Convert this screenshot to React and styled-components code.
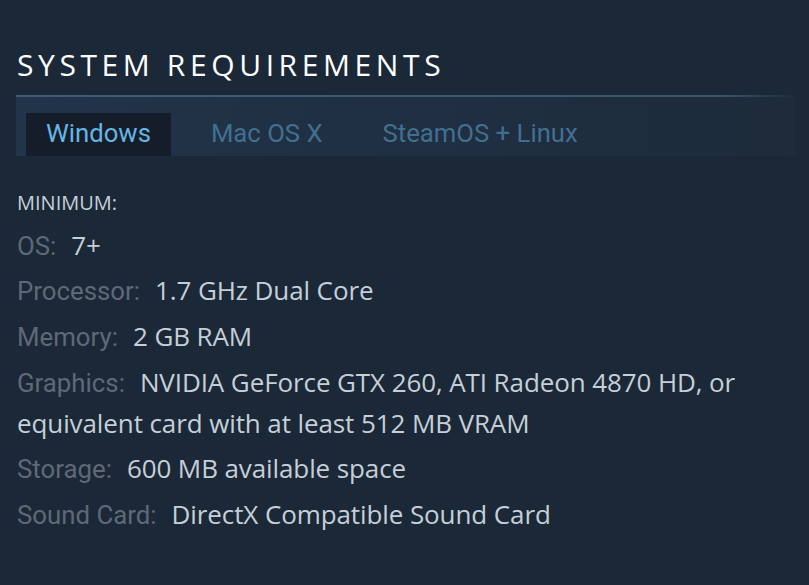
import React from "react";
import styled, { createGlobalStyle } from "styled-components";

const Global = createGlobalStyle`
  html, body { margin: 0; padding: 0; background: #1b2838; }
  body { width: 809px; height: 585px; overflow: hidden; }
`;

const Page = styled.div`
  box-sizing: border-box;
  width: 809px;
  height: 585px;
  padding: 47px 14px 0 16px;
  background: #1b2838;
`;

const Heading = styled.h2`
  margin: 0 0 12px 1px;
  font-family: "Open Sans", "Noto Sans", sans-serif;
  font-weight: 400;
  font-size: 30px;
  line-height: 36px;
  letter-spacing: 4.6px;
  color: #ffffff;
`;

const TabBar = styled.div`
  display: flex;
  gap: 20px;
  padding: 16px 10px 0 10px;
  height: 43px;
  border-top: 2px solid transparent;
  border-image: linear-gradient(to right, #3f5c76 0%, #3c566e 90%, rgba(60, 86, 110, 0) 100%) 1;
  background: linear-gradient(to right, #22344a 0%, #1f2e40 60%, #1d2b3b 100%);
`;

const Tab = styled.div`
  box-sizing: border-box;
  height: 43px;
  padding: 0 20px 3px 20px;
  font-family: Roboto, "Liberation Sans", sans-serif;
  font-size: 25.7px;
  line-height: 40px;
  color: ${(p) => (p.$active ? "#67b5e3" : "#41708f")};
  background: ${(p) => (p.$active ? "#141d29" : "transparent")};
  white-space: nowrap;
`;

const Body = styled.div`
  padding: 35px 0 0 1px;
`;

const Title = styled.div`
  font-family: "Open Sans", "Noto Sans", sans-serif;
  font-size: 20px;
  line-height: 24px;
  color: #c6d0d8;
  margin-bottom: 9.5px;
`;

const List = styled.ul`
  list-style: none;
  margin: 0;
  padding: 0;
`;

const Item = styled.li`
  font-family: "Open Sans", "Noto Sans", sans-serif;
  font-size: 26px;
  line-height: 41px;
  letter-spacing: -0.1px;
  color: #c6cfd7;
  margin-bottom: 4.7px;
`;

const Label = styled.span`
  font-family: Roboto, "Liberation Sans", sans-serif;
  font-size: 25.8px;
  line-height: 0;
  letter-spacing: 0;
  color: #5e6975;
  margin-right: 15px;
`;

const rows = [
  ["OS:", "7+"],
  ["Processor:", "1.7 GHz Dual Core"],
  ["Memory:", "2 GB RAM"],
  ["Graphics:", "NVIDIA GeForce GTX 260, ATI Radeon 4870 HD, or equivalent card with at least 512 MB VRAM"],
  ["Storage:", "600 MB available space"],
  ["Sound Card:", "DirectX Compatible Sound Card"],
];

export default function App() {
  return (
    <Page>
      <Global />
      <Heading>SYSTEM REQUIREMENTS</Heading>
      <TabBar>
        <Tab $active>Windows</Tab>
        <Tab>Mac OS X</Tab>
        <Tab>SteamOS + Linux</Tab>
      </TabBar>
      <Body>
        <Title>MINIMUM:</Title>
        <List>
          {rows.map(([l, v]) => (
            <Item key={l}>
              <Label>{l}</Label>
              {v}
            </Item>
          ))}
        </List>
      </Body>
    </Page>
  );
}
